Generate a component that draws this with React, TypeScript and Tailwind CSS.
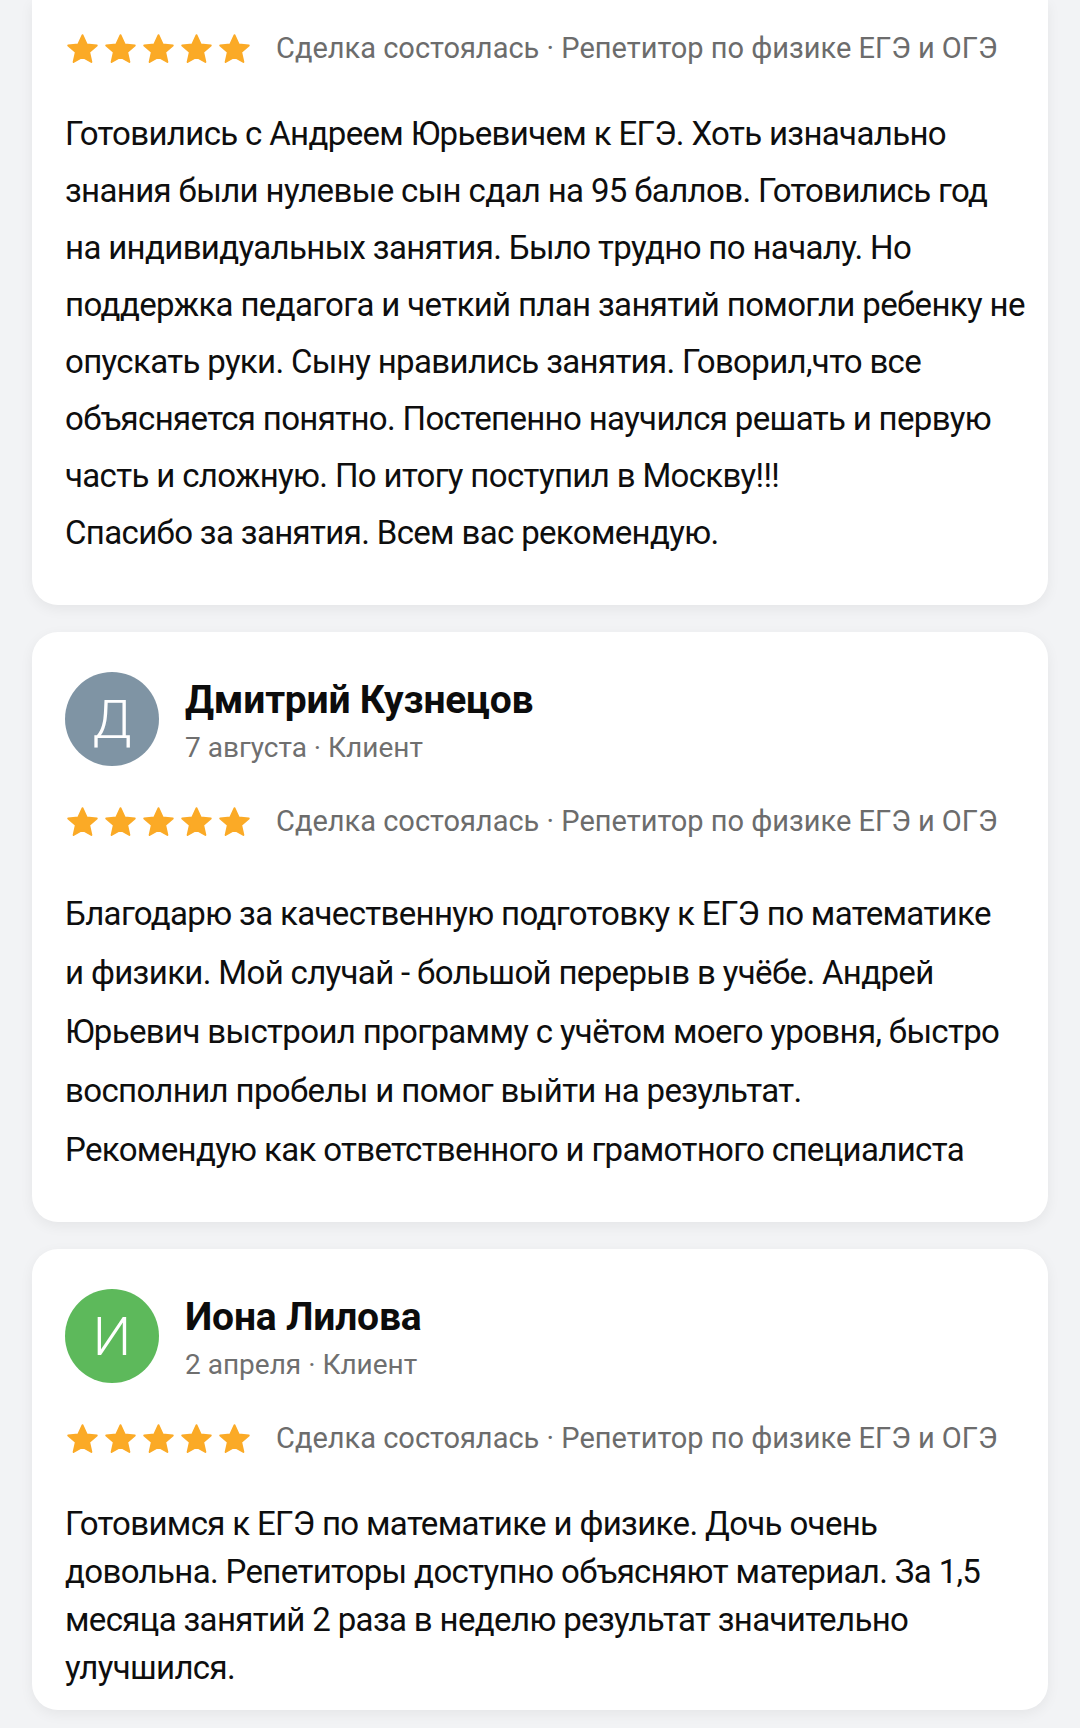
import React from 'react'

type Review = {
  name?: string
  initial?: string
  avatar?: string
  date?: string
  lines: string[]
  lineHeight: string
  bodyTop: string
  bottom: string
}

const reviews: Review[] = [
  {
    lines: [
      'Готовились с Андреем Юрьевичем к ЕГЭ. Хоть изначально',
      'знания были нулевые сын сдал на 95 баллов. Готовились год',
      'на индивидуальных занятия. Было трудно по началу. Но',
      'поддержка педагога и четкий план занятий помогли ребенку не',
      'опускать руки. Сыну нравились занятия. Говорил,что все',
      'объясняется понятно. Постепенно научился решать и первую',
      'часть и сложную. По итогу поступил в Москву!!!',
      'Спасибо за занятия. Всем вас рекомендую.',
    ],
    lineHeight: 'leading-[57px]',
    bodyTop: 'mt-[38px]',
    bottom: 'pb-[44px]',
  },
  {
    name: 'Дмитрий Кузнецов',
    initial: 'Д',
    avatar: 'bg-[#7f94a4]',
    date: '7 августа',
    lines: [
      'Благодарю за качественную подготовку к ЕГЭ по математике',
      'и физики. Мой случай - большой перерыв в учёбе. Андрей',
      'Юрьевич выстроил программу с учётом моего уровня, быстро',
      'восполнил пробелы и помог выйти на результат.',
      'Рекомендую как ответственного и грамотного специалиста',
    ],
    lineHeight: 'leading-[59px]',
    bodyTop: 'mt-[44px]',
    bottom: 'pb-[43px]',
  },
  {
    name: 'Иона Лилова',
    initial: 'И',
    avatar: 'bg-[#5db95b]',
    date: '2 апреля',
    lines: [
      'Готовимся к ЕГЭ по математике и физике. Дочь очень',
      'довольна. Репетиторы доступно объясняют материал. За 1,5',
      'месяца занятий 2 раза в неделю результат значительно',
      'улучшился.',
    ],
    lineHeight: 'leading-[48px]',
    bodyTop: 'mt-[43px]',
    bottom: 'pb-[18px]',
  },
]

function Star() {
  return (
    <svg viewBox="0 0 24 24" className="w-[35px] h-[35px]">
      <path
        d="M12 2.2l2.9 6.3 6.9.7-5.2 4.6 1.5 6.8L12 17.1l-6.1 3.5 1.5-6.8-5.2-4.6 6.9-.7z"
        fill="#fbaa26"
        stroke="#fbaa26"
        strokeWidth="1.3"
        strokeLinejoin="round"
      />
    </svg>
  )
}

function Card({ r, first }: { r: Review; first?: boolean }) {
  return (
    <div
      className={
        'bg-white shadow-[0_4px_14px_rgba(0,0,0,0.06)] px-[33px] ' +
        r.bottom +
        (first ? ' rounded-b-[26px] pt-[31px]' : ' rounded-[26px] pt-[40px]')
      }
    >
      {r.name && (
        <div className="flex gap-[26px] mb-[38px]">
          <div
            className={
              'w-[94px] h-[94px] rounded-full flex items-center justify-center text-white text-[54px] font-light ' +
              r.avatar
            }
          >
            {r.initial}
          </div>
          <div className="flex flex-col mt-[6px]">
            <span className="text-[39px] font-bold leading-[44px] text-[#0c0c0c] tracking-[-0.2px]">{r.name}</span>
            <span className="mt-2 text-[28px] leading-[36px] text-[#6f6f6f]">{r.date} · Клиент</span>
          </div>
        </div>
      )}
      <div className="flex items-center h-[36px]">
        <div className="flex gap-[3px]">
          <Star />
          <Star />
          <Star />
          <Star />
          <Star />
        </div>
        <span className="ml-[24px] text-[29px] text-[#6c6c6c] whitespace-nowrap">
          Сделка состоялась · Репетитор по физике ЕГЭ и ОГЭ
        </span>
      </div>
      <div
        className={
          'text-[33px] tracking-[-0.65px] text-[#0e0e0e] whitespace-nowrap ' + r.lineHeight + ' ' + r.bodyTop
        }
      >
        {r.lines.map((l, i) => (
          <div key={i}>{l}</div>
        ))}
      </div>
    </div>
  )
}

export default function App() {
  return (
    <div className="min-h-[1728px] bg-[#f2f3f5] px-[32px] flex flex-col gap-[27px] font-['Roboto',sans-serif]">
      {reviews.map((r, i) => (
        <Card key={i} r={r} first={i === 0} />
      ))}
    </div>
  )
}
